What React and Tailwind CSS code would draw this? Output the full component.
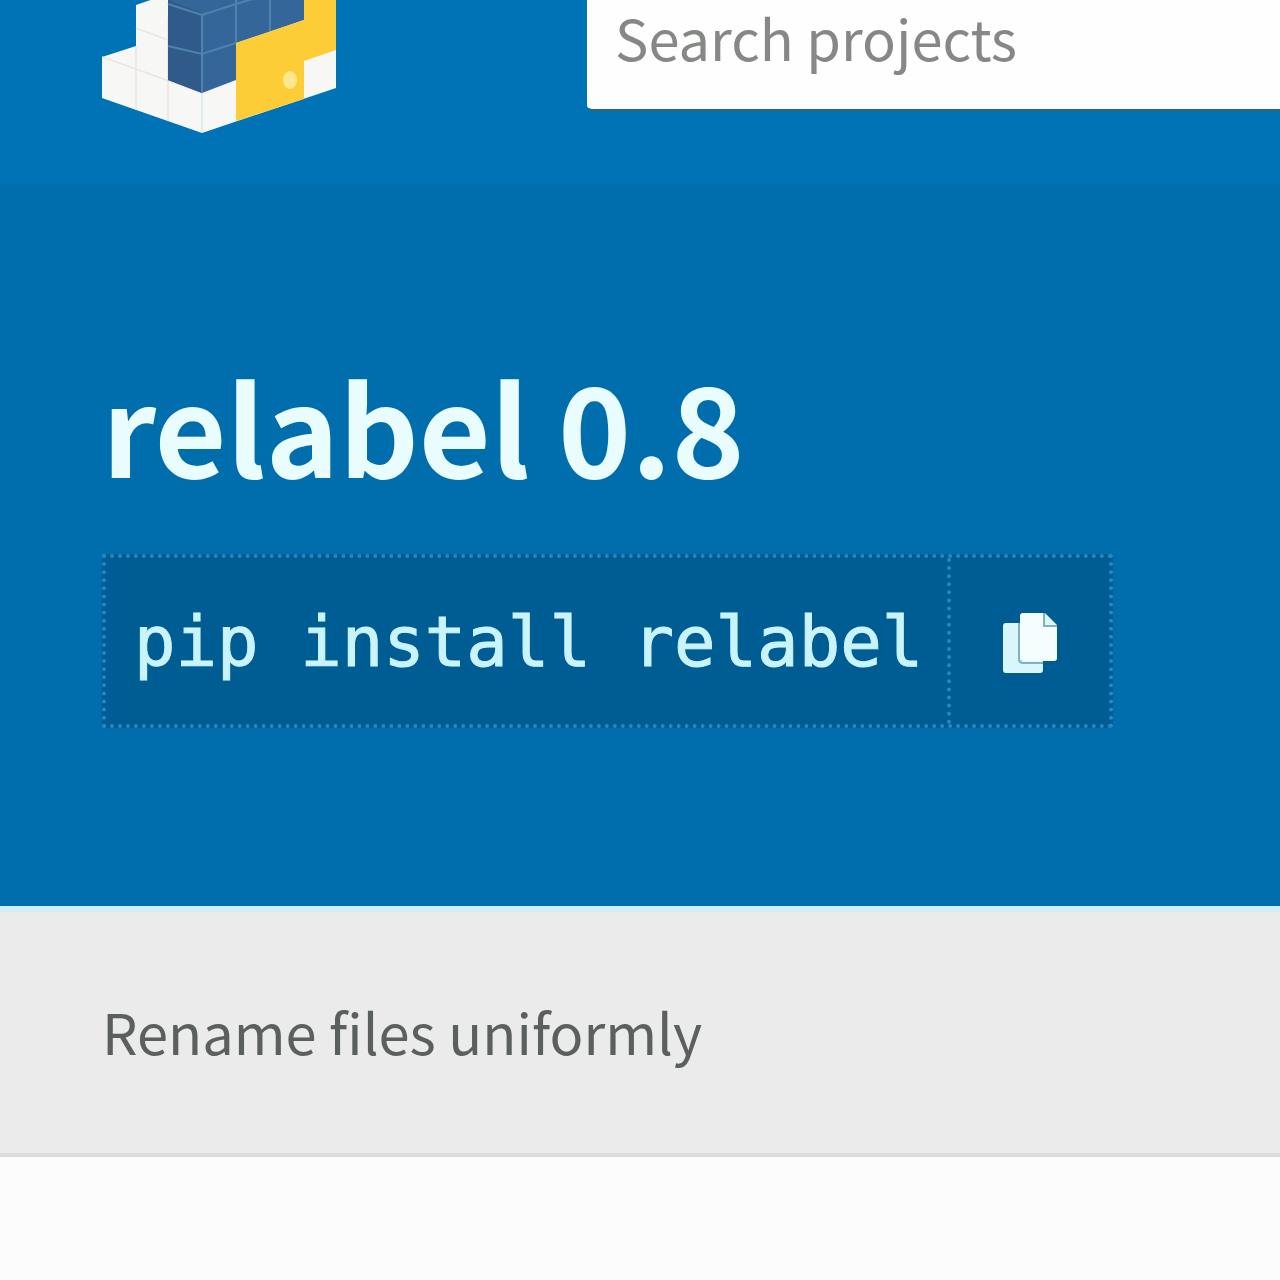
function Logo() {
  return (
    <svg viewBox="0 0 234 134" className="block h-[134px] w-[234px]" aria-hidden="true">
      <path d="M0 57 34 46V5L66-6H234V88L100 133 0 98Z" fill="#f7f7f5" />
      <path d="M34 46V110M0 57 34 69M34 69 100 93M34 28 66 40M66 17V121" fill="none" stroke="#ebe5e2" strokeWidth="1.5" />
      <path d="M100 93V133" stroke="#d2ecf0" strokeWidth="1.5" />
      <path d="M66 0H202V20L134 43V80L100 93 66 80Z" fill="#35669a" />
      <path d="M66 0 100 13V93L66 80Z" fill="#2f5a89" />
      <path d="M66 4 100 15 134 4 168-6M66 46 100 54 134 43M100 14V93M134 0V43M168 0V31" fill="none" stroke="#4e83ad" strokeWidth="2" />
      <path d="M202 0H234V50L202 61V99L134 121V43L202 20Z" fill="#fdcd38" />
      <ellipse cx="188" cy="80" rx="7" ry="9" fill="#fde88a" />
    </svg>
  );
}

function CopyIcon() {
  return (
    <svg viewBox="0 0 54 60" className="h-[60px] w-[54px]" aria-hidden="true">
      <path d="M3 10H18V48H40V57Q40 60 37 60H3Q0 60 0 57V13Q0 10 3 10Z" fill="#d9f6fb" />
      <path d="M16 10V46Q16 50 20 50H40" fill="none" stroke="#7fb0c6" strokeWidth="2" />
      <path d="M20 0H40V11Q40 14 43 14H54V45Q54 48 51 48H20Q17 48 17 45V3Q17 0 20 0Z" fill="#f6fdfd" />
      <path d="M42 0 54 12H42Z" fill="#d9f6fb" />
      <path d="M41 0V13H54" fill="none" stroke="#7fb0c6" strokeWidth="2" />
    </svg>
  );
}

export default function App() {
  return (
    <div className="min-h-screen bg-[#fcfcfc] font-['Noto_Sans_CJK_SC',sans-serif]">
      <header className="flex items-start gap-[251px] bg-[#0073b7] pb-[50px] pl-[102px]">
        <a href="#home" aria-label="Home" className="shrink-0">
          <Logo />
        </a>
        <input
          type="search"
          aria-label="Search projects"
          placeholder="Search projects"
          className="h-[112px] min-w-0 flex-1 rounded-bl-md border-b-3 border-[#1c6a93] bg-[#fdfefd] pr-4 pb-9 pl-7 text-[56px] text-[#777] outline-none placeholder:text-[#858885]"
        />
      </header>
      <main>
        <section className="bg-[#006dad] px-[102px] pt-[146px] pb-[178px]">
          <h1 className="text-[124px] leading-[188px] font-bold text-[#e9fdff]">relabel 0.8</h1>
          <div className="mt-[36px] flex h-[174px] w-fit border-4 border-dotted border-[#2787be] bg-[#005d93] text-[#c9f4fb]">
            <code className="flex items-center pt-1 pr-6 pl-7 font-['DejaVu_Sans_Mono',monospace] text-[69px] whitespace-pre [-webkit-text-stroke:1px_#c9f4fb]">pip install relabel</code>
            <button type="button" aria-label="Copy to clipboard" className="flex w-[162px] items-center justify-center border-l-4 border-dotted border-[#2787be] pt-1">
              <CopyIcon />
            </button>
          </div>
        </section>
        <section className="border-t-6 border-b-4 border-t-[#d2edf8] border-b-[#dcdcdc] bg-[#eaebea] px-[102px] pt-[75px] pb-[78px]">
          <p className="text-[56px] leading-[88px] text-[#5b605d]">Rename files uniformly</p>
        </section>
      </main>
    </div>
  );
}
